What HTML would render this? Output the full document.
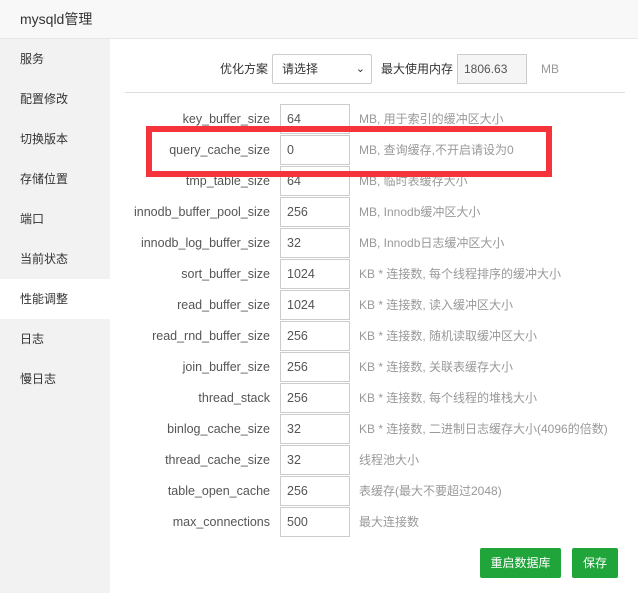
<!DOCTYPE html>
<html><head><meta charset="utf-8"><style>
*{box-sizing:border-box;margin:0;padding:0}
body{width:638px;height:593px;overflow:hidden;background:#fff;font-family:"Liberation Sans","Noto Sans CJK SC",sans-serif;font-size:12px;color:#555;position:relative}
.hd{position:absolute;left:0;top:0;width:638px;height:39px;background:#f8f8f8;border-bottom:1px solid #e8e8e8;font-size:14px;color:#333;line-height:38px;padding-left:20px}
.sb{position:absolute;left:0;top:39px;width:110px;height:554px;background:#f2f2f2}
.sb div{height:40px;line-height:40px;padding-left:20px;color:#333;font-size:12px}
.sb .on{background:#fff}
.t{position:absolute;white-space:nowrap}
.row{position:absolute;left:0;width:638px;height:30px}
.row .l{position:absolute;right:368px;line-height:30px;color:#555;font-size:12.5px}
.row .i{position:absolute;left:280px;width:70px;height:30px;border:1px solid #ccc;line-height:28px;padding-left:6px;color:#555;font-size:12.5px}
.row .d{position:absolute;left:359px;line-height:30px;color:#999;font-size:12px}
.btn{position:absolute;background:#20a53a;color:#fff;border-radius:2px;text-align:center;line-height:30px;font-size:12px;height:30px;top:548px}
</style></head><body>
<div class="hd">mysqld管理</div>
<div class="sb"><div>服务</div><div>配置修改</div><div>切换版本</div><div>存储位置</div><div>端口</div><div>当前状态</div><div class="on">性能调整</div><div>日志</div><div>慢日志</div></div>
<div class="t" style="left:220px;top:55px;line-height:29px;color:#333">优化方案</div>
<div class="t" style="left:272px;top:54px;width:100px;height:30px;border:1px solid #ccc;border-radius:2px;line-height:28px;padding-left:9px;color:#333">请选择<span style="position:absolute;right:6px;top:0;font-size:11px">&#8964;</span></div>
<div class="t" style="left:381px;top:55px;line-height:29px;color:#333">最大使用内存</div>
<div class="t" style="left:457px;top:54px;width:70px;height:30px;border:1px solid #ccc;background:#f5f5f5;line-height:28px;padding-left:6px;color:#555">1806.63</div>
<div class="t" style="left:541px;top:55px;line-height:29px;color:#999">MB</div>
<div class="t" style="left:125px;top:92px;width:500px;height:1px;background:#ddd"></div>

<div class="row" style="top:104px"><span class="l">key_buffer_size</span><span class="i">64</span><span class="d">MB, 用于索引的缓冲区大小</span></div>
<div class="row" style="top:135px"><span class="l">query_cache_size</span><span class="i">0</span><span class="d">MB, 查询缓存,不开启请设为0</span></div>
<div class="row" style="top:166px"><span class="l">tmp_table_size</span><span class="i">64</span><span class="d">MB, 临时表缓存大小</span></div>
<div class="row" style="top:197px"><span class="l">innodb_buffer_pool_size</span><span class="i">256</span><span class="d">MB, Innodb缓冲区大小</span></div>
<div class="row" style="top:228px"><span class="l">innodb_log_buffer_size</span><span class="i">32</span><span class="d">MB, Innodb日志缓冲区大小</span></div>
<div class="row" style="top:259px"><span class="l">sort_buffer_size</span><span class="i">1024</span><span class="d">KB * 连接数, 每个线程排序的缓冲大小</span></div>
<div class="row" style="top:290px"><span class="l">read_buffer_size</span><span class="i">1024</span><span class="d">KB * 连接数, 读入缓冲区大小</span></div>
<div class="row" style="top:321px"><span class="l">read_rnd_buffer_size</span><span class="i">256</span><span class="d">KB * 连接数, 随机读取缓冲区大小</span></div>
<div class="row" style="top:352px"><span class="l">join_buffer_size</span><span class="i">256</span><span class="d">KB * 连接数, 关联表缓存大小</span></div>
<div class="row" style="top:383px"><span class="l">thread_stack</span><span class="i">256</span><span class="d">KB * 连接数, 每个线程的堆栈大小</span></div>
<div class="row" style="top:414px"><span class="l">binlog_cache_size</span><span class="i">32</span><span class="d">KB * 连接数, 二进制日志缓存大小(4096的倍数)</span></div>
<div class="row" style="top:445px"><span class="l">thread_cache_size</span><span class="i">32</span><span class="d">线程池大小</span></div>
<div class="row" style="top:476px"><span class="l">table_open_cache</span><span class="i">256</span><span class="d">表缓存(最大不要超过2048)</span></div>
<div class="row" style="top:507px"><span class="l">max_connections</span><span class="i">500</span><span class="d">最大连接数</span></div>

<div class="t" style="left:146px;top:126px;width:406px;height:51px;border:6px solid #f5333a"></div>
<div class="btn" style="left:480px;width:81px">重启数据库</div>
<div class="btn" style="left:572px;width:46px">保存</div>
</body></html>
